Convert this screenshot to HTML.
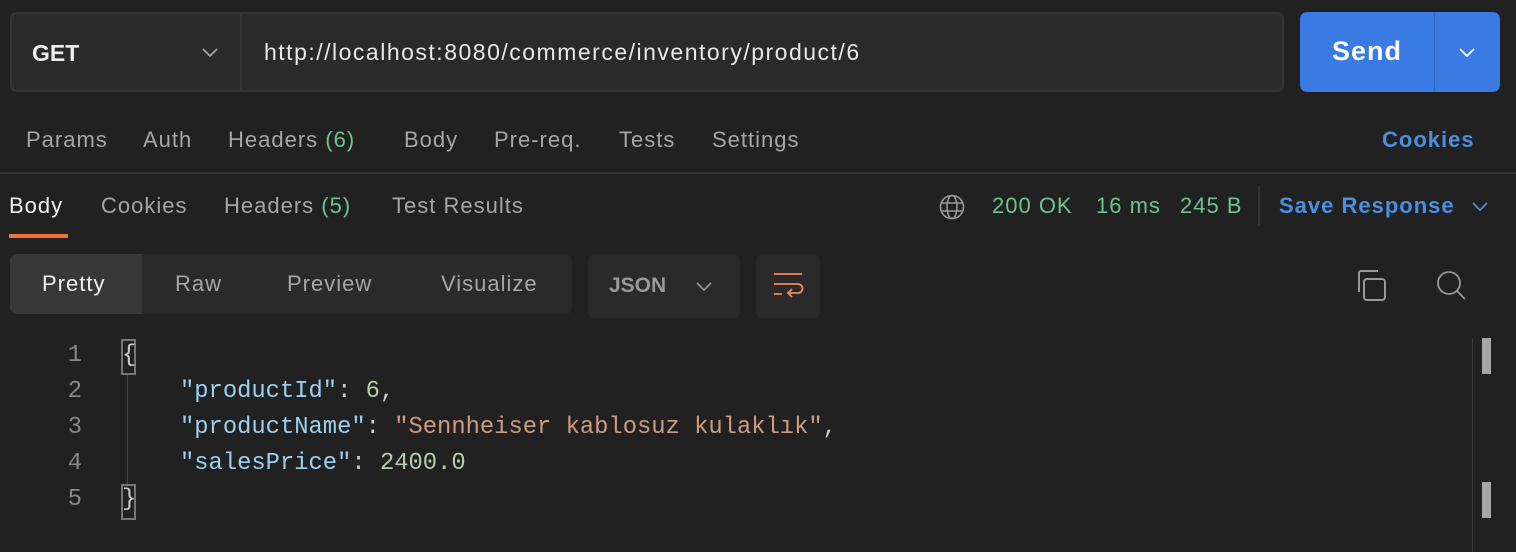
<!DOCTYPE html>
<html><head><meta charset="utf-8"><style>
*{margin:0;padding:0;box-sizing:border-box}
body{width:1516px;height:552px;background:#212121;font-family:"Liberation Sans",sans-serif;color:#a6a6a6;position:relative;overflow:hidden}
.a{position:absolute;white-space:nowrap}
.t{font-size:22px;color:#a6a6a6;letter-spacing:1px}
.g{color:#6cc58a}
.b{color:#4a8fe0;font-weight:bold}
.mono{font-family:"Liberation Mono",monospace;font-size:23.8px}
.ln{color:#888;width:40px;text-align:right;left:42px}
.k{color:#9cd0f0}.s{color:#d09a80}.n{color:#b5cea8}.p{color:#ccc}
</style></head><body>
<div class="a" style="left:10px;top:12px;width:1274px;height:80px;background:#2a2a2a;border:2px solid #363636;border-radius:7px"></div>
<div class="a" style="left:240px;top:14px;width:2px;height:76px;background:#363636"></div>
<div class="a" style="left:32px;top:40px;font-size:23px;font-weight:bold;color:#eee">GET</div>
<svg class="a" style="left:200px;top:45px" width="20" height="14"><path d="M3 4l7 7 7-7" fill="none" stroke="#aaa" stroke-width="1.6"/></svg>
<div class="a" style="left:264px;top:39px;font-size:23px;color:#e8e8e8;letter-spacing:1.5px">http://localhost:8080/commerce/inventory/product/6</div>
<div class="a" style="left:1300px;top:12px;width:200px;height:80px;background:#3a7be3;border-radius:7px"></div>
<div class="a" style="left:1434px;top:12px;width:1px;height:80px;background:#3068c4"></div>
<div class="a" style="left:1332px;top:36px;font-size:27px;font-weight:bold;color:#fff;letter-spacing:1px">Send</div>
<svg class="a" style="left:1457px;top:45px" width="20" height="14"><path d="M3 4l7 7 7-7" fill="none" stroke="#fff" stroke-width="1.8"/></svg>

<div class="a t" style="left:26px;top:127px">Params</div>
<div class="a t" style="left:143px;top:127px">Auth</div>
<div class="a t" style="left:228px;top:127px">Headers <span class="g">(6)</span></div>
<div class="a t" style="left:404px;top:127px">Body</div>
<div class="a t" style="left:494px;top:127px">Pre-req.</div>
<div class="a t" style="left:619px;top:127px">Tests</div>
<div class="a t" style="left:712px;top:127px">Settings</div>
<div class="a t b" style="left:1382px;top:127px">Cookies</div>
<div class="a" style="left:0;top:172px;width:1516px;height:2px;background:#333"></div>

<div class="a t" style="left:9px;top:193px;color:#f0f0f0">Body</div>
<div class="a" style="left:9px;top:234px;width:59px;height:4px;background:#f07040"></div>
<div class="a t" style="left:101px;top:193px">Cookies</div>
<div class="a t" style="left:224px;top:193px">Headers <span class="g">(5)</span></div>
<div class="a t" style="left:392px;top:193px">Test Results</div>
<svg class="a" style="left:936px;top:191px" width="32" height="32"><g fill="none" stroke="#999" stroke-width="1.6"><circle cx="16" cy="16" r="11.5"/><ellipse cx="16" cy="16" rx="5" ry="11.5"/><path d="M5 12h22M5 20h22"/></g></svg>
<div class="a t g" style="left:992px;top:193px">200 OK</div>
<div class="a t g" style="left:1096px;top:193px">16 ms</div>
<div class="a t g" style="left:1180px;top:193px">245 B</div>
<div class="a" style="left:1258px;top:186px;width:2px;height:40px;background:#333"></div>
<div class="a t b" style="left:1279px;top:193px">Save Response</div>
<svg class="a" style="left:1470px;top:199px" width="20" height="14"><path d="M3 4l7 7 7-7" fill="none" stroke="#4a8fe0" stroke-width="1.8"/></svg>

<div class="a" style="left:10px;top:254px;width:562px;height:60px;background:#2a2a2a;border-radius:7px;overflow:hidden"><div style="width:132px;height:60px;background:#383838"></div></div>
<div class="a t" style="left:42px;top:271px;color:#f0f0f0">Pretty</div>
<div class="a t" style="left:175px;top:271px">Raw</div>
<div class="a t" style="left:287px;top:271px">Preview</div>
<div class="a t" style="left:441px;top:271px">Visualize</div>
<div class="a" style="left:588px;top:254px;width:152px;height:64px;background:#2a2a2a;border-radius:7px"></div>
<div class="a" style="left:609px;top:274px;font-size:21px;font-weight:bold;color:#999">JSON</div>
<svg class="a" style="left:694px;top:279px" width="20" height="14"><path d="M3 4l7 7 7-7" fill="none" stroke="#999" stroke-width="1.6"/></svg>
<div class="a" style="left:756px;top:254px;width:64px;height:64px;background:#2a2a2a;border-radius:7px"></div>
<svg class="a" style="left:772px;top:270px" width="34" height="34"><g fill="none" stroke="#f08a5c" stroke-width="1.8"><path d="M2 4h28M2 14h24a4.5 4.5 0 0 1 0 9h-9M2 24h8M20 19l-4 4 4 4"/></g></svg>
<svg class="a" style="left:1356px;top:268px" width="34" height="34"><g fill="none" stroke="#999" stroke-width="2"><rect x="8" y="11" width="21" height="21" rx="3"/><path d="M3 24V5a2 2 0 0 1 2-2h17"/></g></svg>
<svg class="a" style="left:1434px;top:268px" width="36" height="36"><g fill="none" stroke="#999" stroke-width="1.8"><circle cx="15" cy="15" r="11"/><path d="M23 23l8 8"/></g></svg>

<div class="a mono ln" style="top:342px">1</div>
<div class="a mono ln" style="top:378px">2</div>
<div class="a mono ln" style="top:414px">3</div>
<div class="a mono ln" style="top:450px">4</div>
<div class="a mono ln" style="top:486px">5</div>
<div class="a" style="left:121px;top:339px;width:15px;height:36px;border:2px solid #777"></div>
<div class="a" style="left:121px;top:484px;width:15px;height:36px;border:2px solid #777"></div>
<div class="a" style="left:127px;top:375px;width:1px;height:109px;background:#444"></div>
<div class="a mono p" style="left:122px;top:342px">{</div>
<div class="a mono p" style="left:122px;top:486px">}</div>
<div class="a mono" style="left:180px;top:378px"><span class="k">"productId"</span><span class="p">: </span><span class="n">6</span><span class="p">,</span></div>
<div class="a mono" style="left:180px;top:414px"><span class="k">"productName"</span><span class="p">: </span><span class="s">"Sennheiser kablosuz kulaklık"</span><span class="p">,</span></div>
<div class="a mono" style="left:180px;top:450px"><span class="k">"salesPrice"</span><span class="p">: </span><span class="n">2400.0</span></div>
<div class="a" style="left:1472px;top:338px;width:1px;height:214px;background:#3a3a3a"></div>
<div class="a" style="left:1482px;top:338px;width:9px;height:36px;background:#a6a6a6"></div>
<div class="a" style="left:1482px;top:482px;width:9px;height:36px;background:#a6a6a6"></div>
</body></html>
